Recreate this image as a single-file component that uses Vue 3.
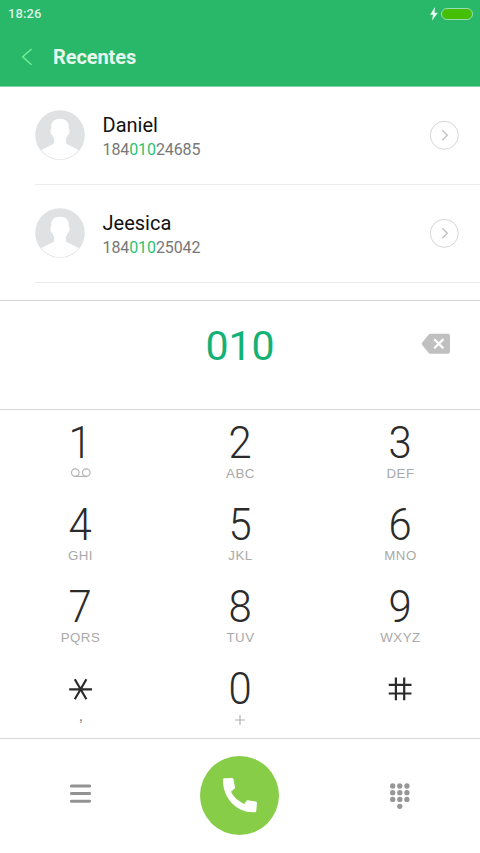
<script setup>
const contacts = [
  { name: 'Daniel', before: '184', match: '010', after: '24685' },
  { name: 'Jeesica', before: '184', match: '010', after: '25042' },
]
const keys = [
  { digit: '1', icon: 'voicemail' },
  { digit: '2', letters: 'ABC' },
  { digit: '3', letters: 'DEF' },
  { digit: '4', letters: 'GHI' },
  { digit: '5', letters: 'JKL' },
  { digit: '6', letters: 'MNO' },
  { digit: '7', letters: 'PQRS' },
  { digit: '8', letters: 'TUV' },
  { digit: '9', letters: 'WXYZ' },
  { symbol: 'star', letters: ',' },
  { digit: '0', icon: 'plus' },
  { symbol: 'hash' },
]
const dots = [0, 1, 2, 3, 4, 5, 6, 7, 8].map((i) => ({ x: 2.7 + (i % 3) * 7.1, y: 3 + Math.floor(i / 3) * 6.7 }))
</script>

<template>
  <main class="phone">
    <header class="top">
      <div class="status">
        <span class="time">18:26</span>
        <div class="power">
          <svg class="bolt" width="8" height="14" viewBox="0 0 8 14"><path d="M5 0 0 7.8h3L2 13.7 7.800 5.700H4.500z" /></svg>
          <div class="battery"></div>
        </div>
      </div>
      <div class="title-bar">
        <svg class="back" width="12" height="18" viewBox="0 0 12 18"><path d="M10.500 1 1.700 8.800l8.800 8" /></svg>
        <h1>Recentes</h1>
      </div>
    </header>

    <section class="contacts">
      <div v-for="c in contacts" :key="c.name" class="contact">
        <svg class="avatar" width="50" height="50" viewBox="0 0 50 50">
          <defs><clipPath id="avatar-clip"><circle cx="25" cy="25" r="24.2" /></clipPath></defs>
          <circle cx="25" cy="25" r="24.800" fill="#dfe1e3" />
          <g clip-path="url(#avatar-clip)" fill="#fff">
            <path d="M25 8.800C19.300 8.800 16.300 11.800 16.300 16.500V18.500C14.900 19.200 15.200 24 17.200 25C17.600 26.500 18.200 27.600 19.100 28.500V32.700C19 34.500 12 36.500 5.500 40.500V51H44.500V40.500C38 36.500 31 34.500 30.900 32.700V28.500C31.800 27.600 32.400 26.500 32.800 25C34.800 24 35.100 19.200 33.700 18.500V16.500C33.700 11.800 30.700 8.800 25 8.800z" />
          </g>
        </svg>
        <div class="info">
          <div class="name">{{ c.name }}</div>
          <div class="number">{{ c.before }}<span class="match">{{ c.match }}</span>{{ c.after }}</div>
        </div>
        <svg class="detail" width="30" height="30" viewBox="0 0 30 30">
          <circle cx="15.300" cy="15.300" r="14" stroke="#d6d6d6" />
          <path d="m13.300 10.300 5 5-5 5" stroke="#c0c0c0" stroke-width="1.300" />
        </svg>
      </div>
    </section>

    <section class="entry">
      <span class="typed">010</span>
      <svg class="erase" width="30" height="22" viewBox="0 0 30 22">
        <path d="M9.500 .700H27q2 0 2 2v16q0 2-2 2H9.500q-1 0-1.800-.8L1.200 12q-1-1.200 0-2.400L7.700 1.500Q8.500 .700 9.500 .700z" fill="#c0c0c0" />
        <path d="m13.800 6.700 8 8m0-8-8 8" stroke="#fff" stroke-width="2.200" stroke-linecap="round" />
      </svg>
    </section>

    <section class="keypad">
      <div v-for="(k, i) in keys" :key="i" class="key">
        <span v-if="k.digit" class="digit">{{ k.digit }}</span>
        <svg v-else-if="k.symbol === 'star'" class="symbol" width="24" height="46" viewBox="0 0 24 46"><path d="M1.200 23.300H24M6.800 13.300l11.600 20M18.400 13.300l-11.600 20" /></svg>
        <svg v-else class="symbol" width="24" height="46" viewBox="0 0 24 46"><path d="M.7 18.900h22.800M.7 27.500h22.800M7.900 11.500V34.300M16.200 11.500V34.300" /></svg>
        <svg v-if="k.icon === 'voicemail'" class="sub-icon" width="22" height="14" viewBox="0 0 22 14"><path d="M6.300 10.400h11.300" /><circle cx="6.300" cy="6.600" r="3.800" /><circle cx="17.300" cy="6.600" r="3.800" /></svg>
        <svg v-else-if="k.icon === 'plus'" class="sub-icon" width="10" height="16" viewBox="0 0 10 16"><path d="M0 8h10M5 3v10" /></svg>
        <span v-else-if="k.letters" class="letters" :class="{ comma: k.letters === ',' }">{{ k.letters }}</span>
      </div>
    </section>

    <footer class="actions">
      <svg width="22" height="20" viewBox="0 0 22 20" class="menu"><path d="M2.400 2h18.200M2.400 9.600h18.200M2.400 17.200h18.200" /></svg>
      <button class="call" aria-label="Ligar">
        <svg width="34" height="35" viewBox="0 0 34 35"><path d="M1 .3 9 0q1.200 0 1.400 1L12 9.300q.1.700-.4 1.200L8 13.800C10.500 18.600 14.500 22.800 21.300 26l2.200-3.300q.4-.5 1.100-.4l8.300 1.100q1.100.2 1.100 1.200l-.7 8.500q-.1 1-1.100 1.100C13 35.500-.6 19 0 1.500Q0 .4 1 .3z" /></svg>
      </button>
      <svg width="20" height="27" viewBox="0 0 20 27" class="dots"><circle v-for="(d, i) in dots" :key="i" :cx="d.x" :cy="d.y" r="2.650" /><circle cx="9.800" cy="23.300" r="2.650" /></svg>
    </footer>
  </main>
</template>

<style>
body { margin: 0; background: #fff; }
</style>

<style scoped>
.phone {
  width: 480px;
  height: 853px;
  display: flex;
  flex-direction: column;
  overflow: hidden;
  background: #fff;
  font-family: Roboto, sans-serif;
}
.phone * { box-sizing: border-box; }
.top { height: 87px; background: #29b769; border-bottom: 1px solid #7fd5a6; }
.status { height: 28px; padding: 0 7px 0 8px; display: flex; align-items: center; justify-content: space-between; }
.time { font-size: 13px; font-weight: 500; line-height: 28px; letter-spacing: .1px; color: #d9f3e4; }
.power { display: flex; align-items: center; gap: 3px; }
.bolt { fill: #eafff1; }
.battery { width: 32px; height: 12px; border: 1.500px solid #98ddb0; border-radius: 6px; background: #45bf05; }
.title-bar { height: 58px; padding-left: 21px; display: flex; align-items: center; }
.back { fill: none; stroke: #70ef93; stroke-width: 1.500; }
h1 { margin: 0 0 0 20px; font-size: 20px; line-height: 58px; font-weight: 700; letter-spacing: -.1px; color: #e6f8ee; }
.contacts { height: 214px; border-bottom: 1px solid #d5d5d5; }
.contact { height: 98px; margin-left: 35px; padding: 0 21px 1px 0; border-bottom: 1px solid #ececec; display: flex; align-items: center; }
.avatar { flex: none; }
.info { margin-left: 17.500px; flex: 1; padding-top: 5px; }
.name { font-size: 20px; line-height: 25px; color: #111; }
.number { font-size: 16px; line-height: 24px; color: #777; letter-spacing: -.1px; }
.match { color: #2cc36f; }
.detail { fill: none; }
.entry { height: 109px; border-bottom: 1px solid #d5d5d5; display: grid; grid-template-columns: 1fr auto 1fr; padding: 20px 29px 0; align-items: start; }
.typed { grid-column: 2; font-size: 41px; line-height: 50px; color: #12b176; }
.erase { justify-self: end; margin-top: 12px; fill: none; }
.keypad { height: 329px; padding-top: 10px; border-bottom: 1px solid #d5d5d5; display: grid; grid-template-columns: repeat(3, 160px); grid-auto-rows: 82px; }
.key { display: flex; flex-direction: column; align-items: center; }
.digit { height: 46px; line-height: 46px; font-size: 44px; font-weight: 300; color: #2b2b2b; transform: scaleX(.95); }
.symbol { stroke: #2b2b2b; stroke-width: 2.200; fill: none; }
.letters { font-family: "Liberation Sans", sans-serif; font-size: 13.300px; line-height: 16px; letter-spacing: .5px; padding-left: 1px; color: #a9a9a9; }
.comma { font-size: 17px; line-height: 7px; color: #888; padding-left: 2px; }
.sub-icon { fill: none; stroke: #b3b3b3; stroke-width: 1.200; }
.actions { flex: 1; display: grid; grid-template-columns: repeat(3, 160px); justify-items: center; align-items: center; }
.menu { stroke: #929292; stroke-width: 3; stroke-linecap: round; margin: 0 1px 4px 0; }
.call { width: 79px; height: 79px; margin: 0 1px 1px 0; padding: 0; border: 0; border-radius: 50%; background: #87cd48; display: flex; align-items: center; justify-content: center; }
.call svg { fill: #fff; }
.dots { fill: #979797; }
</style>
